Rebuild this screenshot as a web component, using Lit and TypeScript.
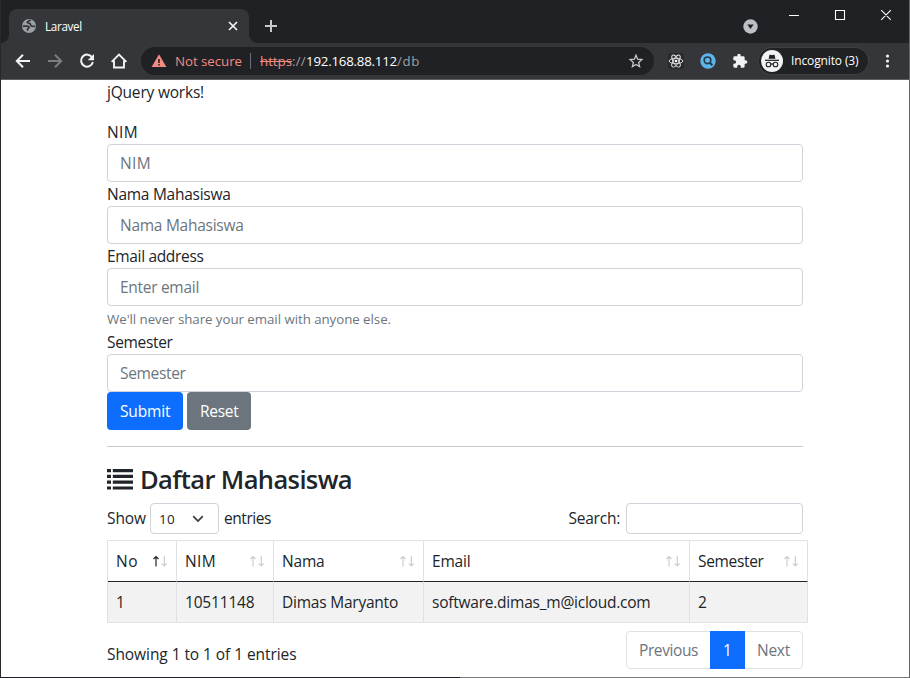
import { LitElement, html, css, svg } from "lit";
import { customElement, property } from "lit/decorators.js";

/** A single line of text whose tracking adapts so that it spans `w` pixels. */
@customElement("fit-text")
class FitText extends LitElement {
  @property({ type: Number }) w = 0;
  @property() text = "";

  static styles = css`
    :host { display: inline-block; white-space: pre; }
    .line { display: inline-block; }
  `;

  updated() {
    const el = this.renderRoot.querySelector(".line") as HTMLElement;
    el.style.letterSpacing = "0px";
    const natural = el.getBoundingClientRect().width;
    el.style.letterSpacing = `${(this.w - natural) / this.text.length}px`;
  }

  render() {
    return html`<span class="line">${this.text}</span>`;
  }
}

const t = (text: string, w: number) => html`<fit-text .text=${text} .w=${w}></fit-text>`;

@customElement("browser-chrome")
class BrowserChrome extends LitElement {
  static styles = css`
    :host { display: block; background: #202124; color: #fff; font: 12px/16px "Open Sans", "Noto Sans", sans-serif; }
    svg { display: block; }
    .strip { display: flex; height: 43px; box-sizing: border-box; }
    .tab { position: relative; display: flex; align-items: center; width: 240px; height: 34px; margin: 9px 0 0 8px; padding: 0 11px 0 12px; box-sizing: border-box; background: #35363a; border-radius: 8px 8px 0 0; }
    .tab::before, .tab::after { content: ""; position: absolute; bottom: 0; width: 8px; height: 8px; }
    .tab::before { left: -8px; background: radial-gradient(circle at 0 0, transparent 7.5px, #35363a 8px); }
    .tab::after { right: -8px; background: radial-gradient(circle at 100% 0, transparent 7.5px, #35363a 8px); }
    .title { flex: 1; margin-left: 8px; font-size: 11.7px; font-weight: 500; }
    .plus { margin: 19px 0 0 15px; }
    .space { flex: 1; }
    .down { margin: 18.5px 31.5px 0 0; }
    .win { margin: 8px 18px 0 0; }
    .bar { display: flex; align-items: center; height: 36px; background: #35363a; border-bottom: 1px solid #5f6063; box-sizing: content-box; }
    .nav { display: flex; gap: 16px; padding: 0 14px; }
    .omni { display: flex; align-items: center; width: 513px; height: 28px; border-radius: 14px; background: #202124; padding: 0 10px 0 10px; box-sizing: border-box; font-size: 13.3px; line-height: 18px; color: #9aa0a6; }
    .warn { color: #f28b82; margin-left: 8px; width: 75px; }
    .sep { width: 1px; height: 16px; background: #6b6e72; margin-right: 9px; }
    .https { color: #f28b82; position: relative; }
    .https::after { content: ""; position: absolute; left: 0; right: 0; top: 9px; height: 1.3px; background: #f28b82; }
    .host { color: #fff; }
    .ext { display: flex; gap: 16px; margin: 0 11px 0 14px; }
    .chip { display: flex; align-items: center; width: 109px; height: 26px; border-radius: 13px; background: #202124; box-shadow: 0 0 0 1px #3e3f43; box-sizing: border-box; padding-left: 2px; font-weight: 500; font-size: 12px; }
    .chip fit-text { margin-left: 8px; }
    .dots { margin-left: 11px; }
  `;

  render() {
    return html`
      <div class="strip">
        <div class="tab">
          <svg width="16" height="16" viewBox="0 0 16 16"><circle cx="8" cy="8" r="7" fill="#9aa0a6"/><path d="M1.800 8.200h4.500c1.300 0 1.900.7 1.700 1.600l-1 .6c-.5.400-.2 1.500-1 2.300M9.500 1.800C9 3.300 6.800 2.700 6.300 4.100c-.4 1.300 2.200.8 2.900 1.700.8 1 0 1.900 1.600 2.300l3.500.2" fill="none" stroke="#35363a" stroke-width="1.700"/></svg>
          <span class="title">${t("Laravel", 37)}</span>
          <svg width="10" height="10" viewBox="0 0 10 10"><path d="M1 1l8 8M9 1 1 9" stroke="#f1f3f4" stroke-width="1.7"/></svg>
        </div>
        <svg class="plus" width="14" height="14" viewBox="0 0 14 14"><path d="M7 1v12M1 7h12" stroke="#c7c9cb" stroke-width="2"/></svg>
        <span class="space"></span>
        <svg class="down" width="15" height="15" viewBox="0 0 15 15"><circle cx="7.5" cy="7.5" r="7.2" fill="#bdc1c6"/><path d="M4.3 5.5h6.4L7.5 10z" fill="#202124"/></svg>
        <svg class="win" width="102" height="14" viewBox="0 0 102 14"><path d="M0 7.500h10M46.500 2.500h9v9h-9zM92.200 2.200l9.600 9.600M101.800 2.200l-9.600 9.600" fill="none" stroke="#fff" stroke-width="1.1"/></svg>
      </div>
      <div class="bar">
        <div class="nav">
          <svg width="16" height="16" viewBox="0 0 16 16"><path d="M15 8H2.5M8 1.8 1.8 8 8 14.2" fill="none" stroke="#f1f3f4" stroke-width="2"/></svg>
          <svg width="16" height="16" viewBox="0 0 16 16"><path d="M1 8h12.5M8 1.8 14.2 8 8 14.2" fill="none" stroke="#7c7d80" stroke-width="2"/></svg>
          <svg width="16" height="16" viewBox="0 0 16 16"><path d="M13.2 4.5A6 6 0 1 0 13.9 9" fill="none" stroke="#f1f3f4" stroke-width="2"/><path d="M15 1v6.3H8.7z" fill="#f1f3f4"/></svg>
          <svg width="16" height="16" viewBox="0 0 16 16"><path d="M.6 8.9 8 1.5l7.4 7.4M3 7.5v7h10v-7" fill="none" stroke="#f1f3f4" stroke-width="1.9"/></svg>
        </div>
        <div class="omni">
          <svg width="16" height="16" viewBox="0 0 16 16"><path d="M8 1.3 15.4 14H.6z" fill="#f28b82"/><path d="M8 6v4M8 11v1.6" stroke="#202124" stroke-width="1.6"/></svg>
          <span class="warn">${t("Not secure", 67)}</span><span class="sep"></span>
          <span class="https">${t("https", 32)}</span><span>${t("://", 14)}</span><span class="host">${t("192.168.88.112", 91)}</span><span>${t("/db", 23)}</span>
          <span class="space"></span>
          <svg width="16" height="16" viewBox="0 0 16 16"><path d="m8 2.200 1.600 4 4.300.4-3.300 2.800 1 4.200L8 11.400l-3.600 2.200 1-4.200-3.300-2.800 4.300-.4z" fill="none" stroke="#c4c6c9" stroke-width="1.300"/></svg>
        </div>
        <div class="ext">
          <svg width="16" height="16" viewBox="0 0 16 16"><rect width="16" height="16" rx="1.500" fill="#292a2d"/><g fill="none" stroke="#e8e8e8" stroke-width=".9">${[0, 60, 120].map((a) => svg`<ellipse cx="8" cy="8" rx="6.800" ry="2.700" transform="rotate(${a} 8 8)"/>`)}</g><circle cx="8" cy="8" r="1.300" fill="#fff"/></svg>
          <svg width="16" height="16" viewBox="0 0 16 16"><circle cx="8" cy="8" r="7.700" fill="#5db5ea"/><circle cx="7.500" cy="7.300" r="3.300" fill="none" stroke="#23364a" stroke-width="1.600"/><path d="m9.800 9.800 2.500 2.500" stroke="#23364a" stroke-width="2"/></svg>
          <svg width="16" height="16" viewBox="0 0 24 24"><path d="M20.500 11H19V7a2 2 0 0 0-2-2h-4V3.500a2.500 2.500 0 0 0-5 0V5H4a2 2 0 0 0-2 2v3.800h1.500a2.700 2.700 0 0 1 0 5.400H2V20a2 2 0 0 0 2 2h3.800v-1.500a2.700 2.700 0 0 1 5.400 0V22H17a2 2 0 0 0 2-2v-4h1.500a2.500 2.500 0 0 0 0-5z" fill="#f1f3f4"/></svg>
        </div>
        <div class="chip">
          <svg width="22" height="22" viewBox="0 0 22 22"><circle cx="11" cy="11" r="11" fill="#f1f3f4"/><path d="M7.600 8.800 8.500 4.800h1.300l1.200.4 1.200-.4h1.300l.9 4z" fill="#202124"/><path d="M4 10.300h14" stroke="#202124" stroke-width="1.200"/><g fill="none" stroke="#202124" stroke-width="1.100"><circle cx="7.500" cy="14.500" r="2.300"/><circle cx="14.500" cy="14.500" r="2.300"/><path d="M9.800 14.200q1.200-.7 2.400 0"/></g></svg>
          ${t("Incognito (3)", 67.5)}
        </div>
        <svg class="dots" width="16" height="16" viewBox="0 0 16 16" fill="#f1f3f4"><circle cx="8.500" cy="3" r="1.600"/><circle cx="8.500" cy="8" r="1.600"/><circle cx="8.500" cy="13" r="1.600"/></svg>
      </div>
    `;
  }
}

const columns: [string, number, string, number][] = [
  ["No", 22, "1", 9],
  ["NIM", 31, "10511148", 69.5],
  ["Nama", 42.5, "Dimas Maryanto", 116],
  ["Email", 38.5, "software.dimas_m@icloud.com", 218.5],
  ["Semester", 65.5, "2", 9],
];

@customElement("app-root")
class AppRoot extends LitElement {
  static styles = css`
    :host { display: block; position: relative; width: 910px; height: 678px; overflow: hidden; box-sizing: border-box; background: #fff; border-left: 1px solid #28292c; border-right: 1px solid #66676a; color: #212529; font: 15.500px/24px "Open Sans", "Noto Sans", sans-serif; }
    svg { display: block; }
    main { margin-left: 106px; width: 696px; }
    .hello { height: 24px; margin: 0 0 16px; }
    .label { height: 24px; }
    .input { height: 38px; box-sizing: border-box; border: 1px solid #ced4da; border-radius: 4px; padding: 6px 12px; color: #6c757d; }
    .help { height: 21px; line-height: 20px; margin-top: 3px; font-size: 13.300px; color: #6c757d; }
    .buttons { display: flex; gap: 4px; }
    .btn { height: 38px; border-radius: 4px; box-sizing: border-box; padding: 7px 0 0 13px; color: #fff; }
    .submit { width: 76px; background: #0d6efd; }
    .reset { width: 64px; background: #6c757d; }
    .rule { height: 1px; background: #c8c9ca; margin: 16px 0; }
    .heading { display: flex; align-items: center; gap: 7px; height: 34px; margin-bottom: 6px; font-size: 25.500px; line-height: 34px; font-weight: 600; }
    .heading fit-text { margin-top: -2px; }
    .tools { display: flex; align-items: center; height: 31px; }
    .tools > fit-text { margin-top: -1px; }
    .select { display: flex; align-items: center; width: 69px; height: 31px; box-sizing: border-box; border: 1px solid #ced4da; border-radius: 4px; padding: 0 14px 0 8px; margin: 0 5px 0 4px; font-size: 13.500px; justify-content: space-between; }
    .search { width: 177px; height: 31px; box-sizing: border-box; border: 1px solid #ced4da; border-radius: 4px; margin-left: 6px; }
    .space { flex: 1; }
    .table { display: grid; grid-template-columns: 69px 97px 150px 266px 118px; width: 700px; margin-top: 6px; border: 1px solid #dee2e6; border-right: 0; }
    .cell { display: flex; align-items: center; justify-content: space-between; height: 40px; padding: 0 7px 0 8px; border-right: 1px solid #dee2e6; }
    .head { border-bottom: 1px solid #212529; }
    .body { background: #f2f2f2; }
    .footer { display: flex; margin-top: 8px; height: 38px; }
    .info { flex: 1; padding-top: 11px; }
    .pages { display: flex; width: 177px; box-sizing: border-box; border: 1px solid #dee2e6; border-radius: 4px; color: #6c757d; line-height: 36px; padding: 0 0 0 12px; }
    .current { width: 35px; height: 38px; margin: -1px 12px 0 12px; background: #0d6efd; color: #fff; text-align: center; line-height: 38px; }
    .edge { position: absolute; left: 0; right: 0; bottom: 0; height: 1px; background: linear-gradient(90deg, #202124 459px, #77787a 459px); }
  `;

  field(label: string, lw: number, hint: string, hw: number) {
    return html`<div class="label">${t(label, lw)}</div><div class="input">${t(hint, hw)}</div>`;
  }

  arrows(active: boolean) {
    return html`<svg width="18" height="12" viewBox="0 0 18 12" fill="none" stroke-width="1.200"><path d="M5 11.500V1.500M2.500 4 5 1.500 7.500 4" stroke=${active ? "#212529" : "#ccced0"}/><path d="M13.300.8v10M10.800 8.300l2.500 2.500 2.500-2.500" stroke="#ccced0"/></svg>`;
  }

  render() {
    return html`
      <browser-chrome></browser-chrome>
      <main>
        <div class="hello">${t("jQuery works!", 97)}</div>
        ${this.field("NIM", 31, "NIM", 31)}
        ${this.field("Nama Mahasiswa", 123.5, "Nama Mahasiswa", 123.5)}
        ${this.field("Email address", 96.5, "Enter email", 79)}
        <div class="help">${t("We'll never share your email with anyone else.", 284)}</div>
        ${this.field("Semester", 65.5, "Semester", 65.5)}
        <div class="buttons">
          <div class="btn submit">${t("Submit", 50.5)}</div>
          <div class="btn reset">${t("Reset", 38.5)}</div>
        </div>
        <div class="rule"></div>
        <div class="heading">
          <svg width="26" height="22" viewBox="0 0 26 22" fill="#212529">${[0, 1, 2, 3].map((i) => svg`<path d="M0 ${i * 5.8}h4v3.200H0zM5.800 ${i * 5.8}H26v3.200H5.800z"/>`)}</svg>
          ${t("Daftar Mahasiswa", 212)}
        </div>
        <div class="tools">
          ${t("Show", 39)}
          <div class="select">${t("10", 16)}<svg width="12" height="8" viewBox="0 0 12 8"><path d="m1.200 1.200 4.800 4.800 4.800-4.800" fill="none" stroke="#343a40" stroke-width="1.700"/></svg></div>
          ${t("entries", 47)}
          <span class="space"></span>
          ${t("Search:", 51.5)}
          <div class="search"></div>
        </div>
        <div class="table">
          ${columns.map(([name, w], i) => html`<div class="cell head">${t(name, w)}${this.arrows(i === 0)}</div>`)}
          ${columns.map(([, , value, w]) => html`<div class="cell body">${t(value, w)}</div>`)}
        </div>
        <div class="footer">
          <div class="info">${t("Showing 1 to 1 of 1 entries", 189.5)}</div>
          <div class="pages">${t("Previous", 59)}<div class="current">1</div>${t("Next", 33)}</div>
        </div>
      </main>
      <div class="edge"></div>
    `;
  }
}
